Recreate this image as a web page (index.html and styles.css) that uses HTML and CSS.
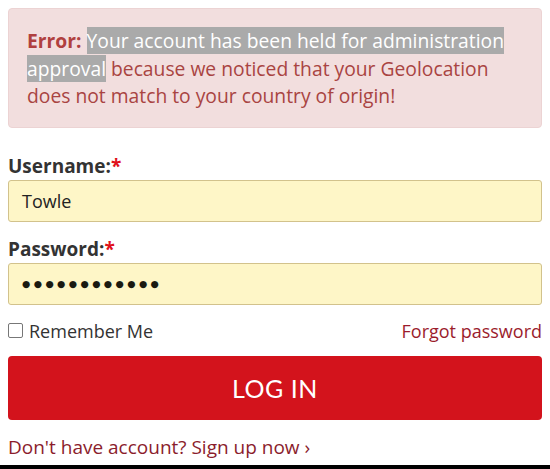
FILE: index.html
```html
<!DOCTYPE html>
<html>
<head>
<meta charset="utf-8">
<link rel="stylesheet" href="styles.css">
</head>
<body>
<div class="alert"><strong>Error:</strong> <span class="sel">Your account has been held for administration approval</span> because we noticed that your Geolocation does not match to your country of origin!</div>
<form class="form">
  <label class="label">Username:<span class="req">*</span></label>
  <div class="input">Towle</div>
  <label class="label label-gap">Password:<span class="req">*</span></label>
  <div class="input dots">●●●●●●●●●●●●</div>
  <div class="row">
    <span class="remember"><span class="box"></span>Remember Me</span>
    <a class="forgot">Forgot password</a>
  </div>
  <div class="btn">LOG IN</div>
  <div class="signup">Don't have account? Sign up now ›</div>
</form>
<div class="edge"></div>
</body>
</html>
```
FILE: styles.css
```css
html, body { margin: 0; padding: 0; background: #fff; }
body { padding: 8px; font-family: "Open Sans", "Noto Sans", sans-serif; overflow: hidden; }
.alert {
  background: #f2dede;
  border: 1px solid #ecd3d3;
  border-radius: 4px;
  padding: 18px 18px 17px;
  color: #a94442;
  font-size: 19.3px;
  line-height: 27.5px;
}
.alert strong { font-weight: 700; color: #b0403f; }
.sel { background: #aaaaaa; color: #fff; }
.form { margin-top: 24px; }
.label { display: block; font-size: 19px; line-height: 28px; font-weight: 700; color: #333; }
.label-gap { margin-top: 13px; }
.req { color: #e0101a; }
.input {
  box-sizing: border-box;
  height: 42px;
  background: #fef6c7;
  border: 1px solid #d2c28c;
  border-radius: 3px;
  padding: 0 13px;
  font-size: 18px;
  line-height: 40px;
  color: #222;
}
.dots { font-family: "DejaVu Sans", sans-serif; font-size: 9.5px; letter-spacing: 3.4px; color: #1a1a10; padding-left: 13px; }
.row { margin-top: 14px; display: flex; justify-content: space-between; align-items: center; height: 24px; font-size: 18px; }
.remember { display: flex; align-items: center; color: #333; }
.box { width: 13px; height: 13px; border: 1px solid #777; border-radius: 2px; margin-right: 6px; background: #fff; }
.forgot { color: #9b1c2c; }
.btn {
  margin-top: 13px;
  height: 64px;
  background: #d3131c;
  border-radius: 4px;
  color: #fff;
  font-family: Lato, "Open Sans", sans-serif;
  font-size: 25px;
  line-height: 64px;
  text-align: center;
  letter-spacing: 0.5px;
}
.signup { margin-top: 15px; font-size: 19px; line-height: 24px; color: #8b1d2c; }
.edge { height: 6px; background: #000; margin: 6px -8px 0; }
```
